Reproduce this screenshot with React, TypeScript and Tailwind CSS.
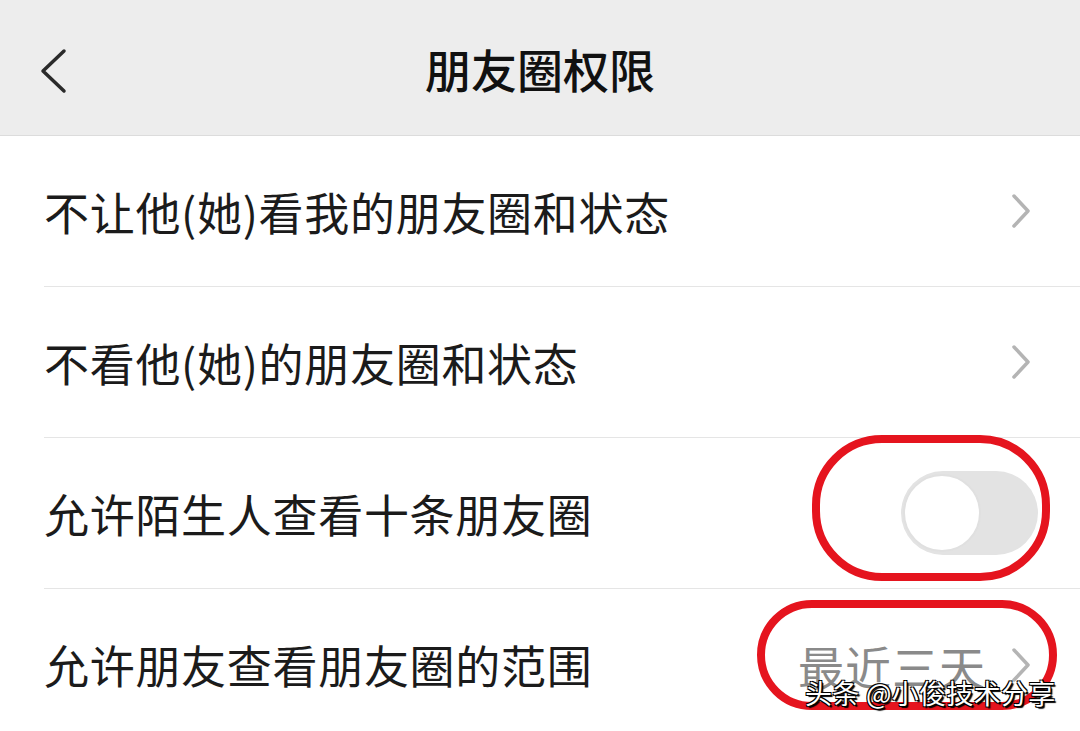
import type { ReactNode } from "react"

function ChevronRight() {
  return (
    <svg width="22" height="36" viewBox="0 0 22 36" className="shrink-0">
      <path d="M4 3 L18 18 L4 33" fill="none" stroke="#b4b4b4" strokeWidth="3.5" strokeLinecap="round" strokeLinejoin="round" />
    </svg>
  )
}

function Row({ label, children, last = false }: { label: string; children?: ReactNode; last?: boolean }) {
  return (
    <div className="flex h-[151px] pl-[44px]">
      <div className={`flex flex-1 items-center justify-between pr-[48px] ${last ? "" : "border-b border-[#e5e5e5]"}`}>
        <span className="text-[45px] leading-none tracking-[0.7px] text-[#1b1b1b]">{label}</span>
        {children}
      </div>
    </div>
  )
}

function Toggle() {
  return (
    <div className="mr-[-6px] flex h-[84px] w-[137px] items-center rounded-full bg-[#e3e3e3] p-[2px]">
      <span className="size-[78px] rounded-full border-2 border-[#e0e0e0] bg-white" />
    </div>
  )
}

export default function App() {
  return (
    <main
      className="relative h-[731px] w-[1080px] overflow-hidden bg-white"
      style={{ fontFamily: '"Noto Sans CJK SC", "Noto Sans", sans-serif' }}
    >
      <header className="relative flex h-[136px] items-center justify-center border-b border-[#dcdcdc] bg-[#ededed]">
        <svg width="32" height="50" viewBox="0 0 32 50" className="absolute left-[38px] top-[46px]">
          <path d="M26 5 L5 25 L26 45" fill="none" stroke="#2a2a2a" strokeWidth="3.5" strokeLinecap="round" strokeLinejoin="round" />
        </svg>
        <h1 className="text-[46px] font-medium leading-none text-[#111]">朋友圈权限</h1>
      </header>

      <Row label="不让他(她)看我的朋友圈和状态">
        <ChevronRight />
      </Row>
      <Row label="不看他(她)的朋友圈和状态">
        <ChevronRight />
      </Row>
      <Row label="允许陌生人查看十条朋友圈">
        <Toggle />
      </Row>
      <Row label="允许朋友查看朋友圈的范围" last>
        <div className="flex items-center gap-[24px]">
          <span className="text-[46px] leading-none tracking-[1px] text-[#8a8a8a]">最近三天</span>
          <ChevronRight />
        </div>
      </Row>

      {/* red annotations */}
      <div className="absolute left-[812px] top-[435px] h-[146px] w-[238px] rounded-[70px] border-[8px] border-[#e5141e]" />
      <div className="absolute left-[757px] top-[600px] h-[110px] w-[300px] rounded-[55px] border-[8px] border-[#e5141e]" />

      {/* watermark */}
      <div
        className="absolute left-[805px] top-[679px] text-[27px] leading-none tracking-[0.3px] text-white"
        style={{ textShadow: "1px 1px 0 #000, -1px -1px 0 #000, 1px -1px 0 #000, -1px 1px 0 #000, 2px 2px 1px #000" }}
      >
        头条 @小俊技术分享
      </div>
    </main>
  )
}
